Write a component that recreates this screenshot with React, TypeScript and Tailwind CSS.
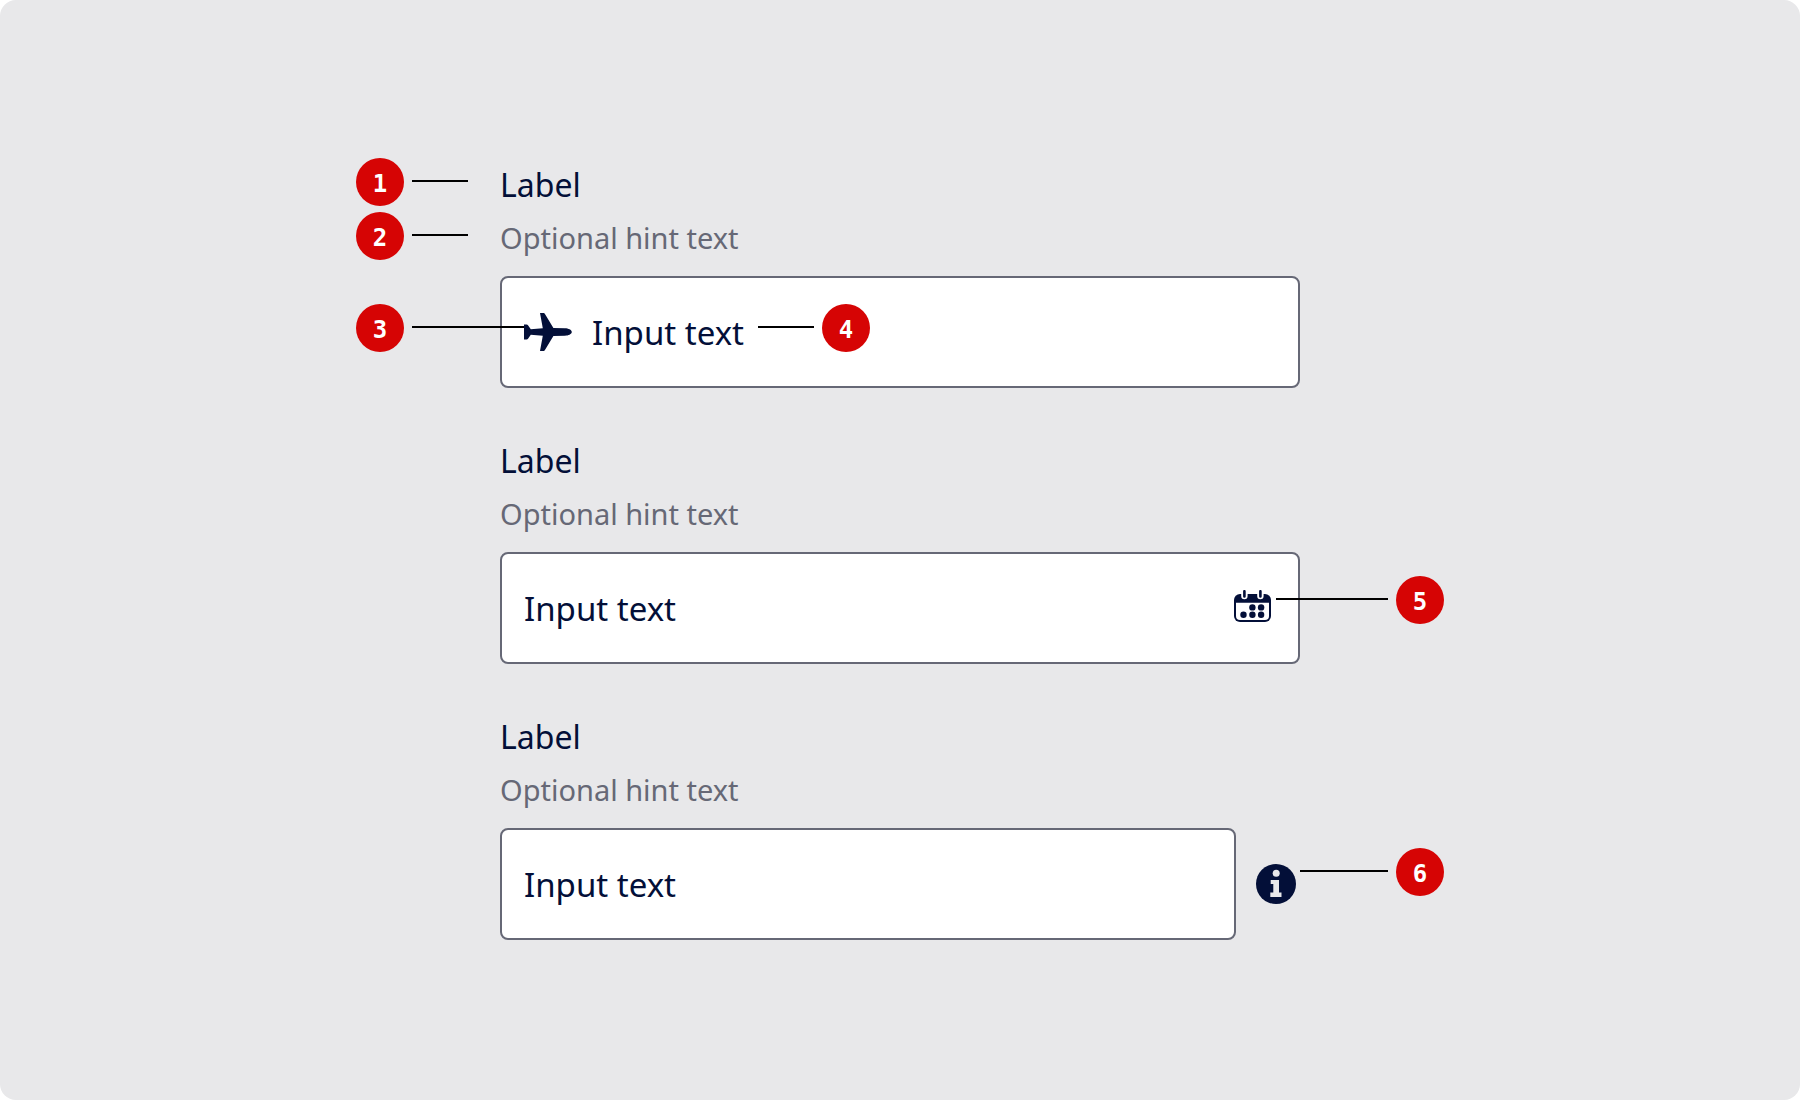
import type { ReactNode } from "react";
import clsx from "clsx";

interface CalloutProps {
  number: number;
  className: string;
  lineClassName: string;
  reverse?: boolean;
}

interface FieldProps {
  id: string;
  leading?: ReactNode;
  trailing?: ReactNode;
  outside?: ReactNode;
  children?: ReactNode;
}

function PlaneIcon() {
  return (
    <svg viewBox="0 0 48 38" className="w-12 shrink-0" fill="currentColor" aria-hidden="true">
      <path d="M0 11.4h2.6c.7 0 1 .3 1.4.8l2.8 4.1 12-1L16 0h3.6c.6 0 .9.2 1.2.7l8.6 14.4 11.6.2c3.2.1 6.8 1.5 6.8 3.7s-3.6 3.6-6.8 3.7l-11.6.2-8.6 14.4c-.3.5-.6.7-1.2.7H16l2.8-15.3-12-1L4 25.8c-.4.5-.7.8-1.4.8H0z" />
    </svg>
  );
}

function CalendarIcon() {
  return (
    <svg viewBox="0 0 37 32" className="w-[37px]" aria-hidden="true">
      <rect y="4" width="37" height="28" rx="6" fill="currentColor" />
      <path d="M2 12.7h33V26a4 4 0 0 1-4 4H6a4 4 0 0 1-4-4z" fill="#fff" />
      <path d="M10.4 0v6M26.4 0v6" stroke="#fff" strokeWidth="6.4" strokeLinecap="round" />
      <path d="M10.4 1.2v5.2M26.4 1.2v5.2" stroke="currentColor" strokeWidth="2.6" strokeLinecap="round" />
      <g fill="currentColor">
        <circle cx="18.4" cy="17.4" r="3.2" />
        <circle cx="27.1" cy="17.4" r="3.2" />
        <circle cx="9.5" cy="24.8" r="3.2" />
        <circle cx="18.4" cy="24.8" r="3.2" />
        <circle cx="27.1" cy="24.8" r="3.2" />
      </g>
    </svg>
  );
}

function InfoIcon() {
  return (
    <svg viewBox="0 0 40 40" className="w-10" aria-hidden="true">
      <circle cx="20" cy="20" r="20" fill="currentColor" />
      <g fill="#e8e8ea">
        <circle cx="20.2" cy="9.2" r="3.5" />
        <path d="M14.7 16H23v12.4h2.5V33H14.3v-4.6h3V20h-2.6z" />
      </g>
    </svg>
  );
}

function Callout({ number, className, lineClassName, reverse }: CalloutProps) {
  return (
    <div
      className={clsx(
        "pointer-events-none absolute z-10 flex items-center gap-2",
        reverse && "flex-row-reverse",
        className
      )}
    >
      <span className="flex size-12 items-center justify-center rounded-full bg-[#d60404] pt-1 font-['DejaVu_Sans_Mono',monospace] text-2xl leading-6 font-bold text-white">
        {number}
      </span>
      <span className={clsx("-mt-0.5 h-0.5 bg-black", lineClassName)} />
    </div>
  );
}

function Field({ id, leading, trailing, outside, children }: FieldProps) {
  return (
    <div className="relative">
      <label htmlFor={id} className="block text-[32px] leading-[50px]">
        Label
      </label>
      <p id={`${id}-hint`} className="mt-2 mb-[18px] text-[29px] leading-10 text-[#666876]">
        Optional hint text
      </p>
      <div className="flex items-center gap-5">
        <div className="flex h-28 min-w-0 flex-1 items-center gap-5 rounded-lg border-2 border-[#666876] bg-white px-[22px]">
          {leading}
          <input
            id={id}
            type="text"
            defaultValue="Input text"
            aria-describedby={`${id}-hint`}
            className="min-w-0 flex-1 bg-transparent pt-0.5 text-[33px] leading-12 outline-none"
          />
          {trailing}
        </div>
        {outside}
      </div>
      {children}
    </div>
  );
}

export default function App() {
  return (
    <main className="flex min-h-screen items-center justify-center rounded-2xl bg-[#e8e8ea] px-6 py-12 font-['Noto_Sans','Open_Sans',sans-serif] text-[#030f38]">
      <div className="flex w-full max-w-[1088px] flex-col gap-12 px-36">
        <Field id="destination" leading={<PlaneIcon />}>
          <Callout number={1} className="-left-36 -top-0.5" lineClassName="w-14" />
          <Callout number={2} className="-left-36 top-13" lineClassName="w-14" />
          <Callout number={3} className="-left-36 top-36" lineClassName="w-28" />
          <Callout number={4} className="left-[258px] top-36" lineClassName="w-14" reverse />
        </Field>

        <Field
          id="date"
          trailing={
            <button type="button" aria-label="Open calendar" className="mr-[5px] -mt-1">
              <CalendarIcon />
            </button>
          }
        >
          <Callout number={5} className="-right-36 top-[140px]" lineClassName="w-28" reverse />
        </Field>

        <Field
          id="details"
          outside={
            <button type="button" aria-label="More information" className="mr-1">
              <InfoIcon />
            </button>
          }
        >
          <Callout number={6} className="-right-36 top-[136px]" lineClassName="w-22" reverse />
        </Field>
      </div>
    </main>
  );
}
